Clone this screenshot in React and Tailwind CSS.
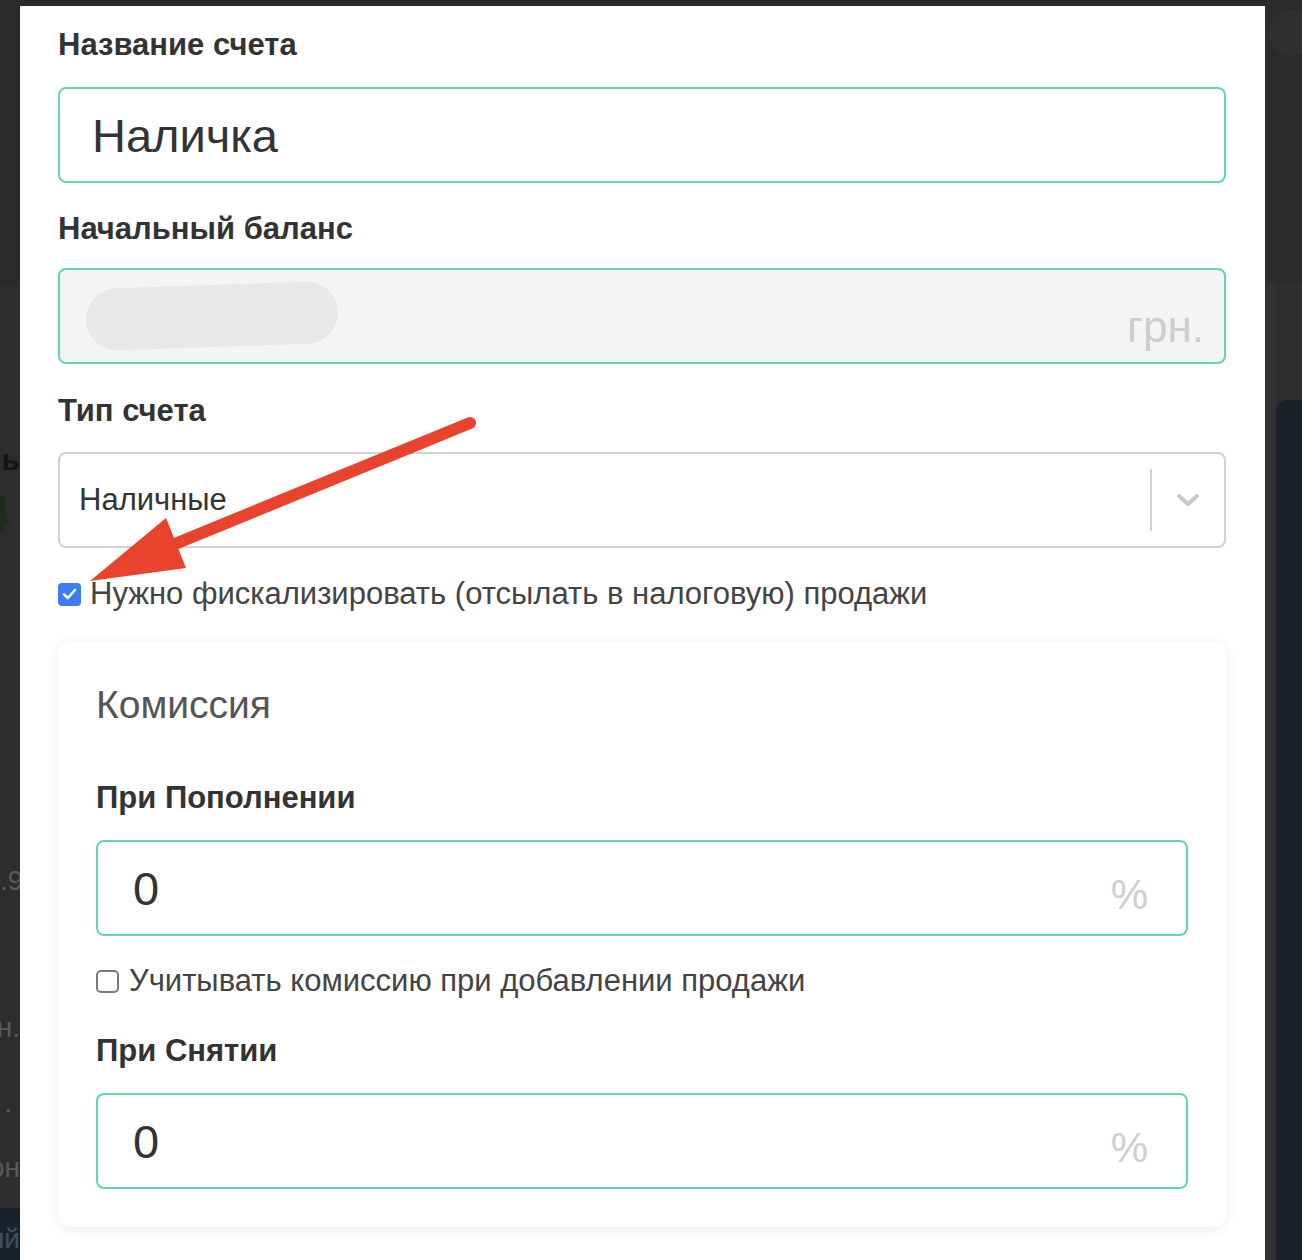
import React from "react";

const font = { fontFamily: '"Liberation Sans", Arial, sans-serif' };

function Label({ children, className = "" }) {
  return (
    <div className={`h-[36px] leading-[36px] text-[31px] font-bold text-[#333] whitespace-nowrap ${className}`}>
      {children}
    </div>
  );
}

function TealInput({ value, suffix, className = "" }) {
  return (
    <div className={`h-[96px] flex items-center border-2 border-[#66d3b5] rounded-[8px] bg-white ${className}`}>
      <div className={`flex-1 text-[47px] text-[#333] leading-none ${suffix ? "pl-[35px]" : "pl-[32px]"}`}>{value}</div>
      {suffix && <div className="pr-[38px] pt-[14px] text-[42px] text-[#cfcfcf] leading-none">{suffix}</div>}
    </div>
  );
}

function Checkbox({ checked }) {
  if (checked) {
    return (
      <div className="w-[23px] h-[23px] rounded-[4px] bg-[#3b7cf4] flex items-center justify-center shrink-0">
        <svg width="15" height="12" viewBox="0 0 15 12" fill="none">
          <path d="M2 6.5L5.8 10L13 2" stroke="white" strokeWidth="2.6" strokeLinecap="round" strokeLinejoin="round" />
        </svg>
      </div>
    );
  }
  return <div className="w-[23px] h-[23px] rounded-[5px] border-2 border-[#7a7a7a] bg-white shrink-0" />;
}

export default function App() {
  return (
    <div style={font} className="w-[1302px] h-[1260px] overflow-hidden bg-[#2b2b2b] flex relative">
      {/* page behind the modal, left side */}
      <div className="w-[20px] shrink-0 flex flex-col overflow-hidden">
        <div className="h-[283px] bg-[#2a2a2a]" />
        <div className="flex-1 bg-[#2d2d2d] flex flex-col">
          <div className="mt-[160px] h-[34px] flex justify-end overflow-hidden">
            <span className="whitespace-nowrap text-[30px] font-bold text-[#151515] leading-[34px]">ль</span>
          </div>
          <div className="mt-[8px] h-[56px] flex justify-end overflow-hidden">
            <span className="whitespace-nowrap text-[52px] font-bold text-[#1b2e20] leading-[56px] mr-[10px]">4</span>
          </div>
          <div className="mt-[325px] h-[30px] flex justify-end overflow-hidden">
            <span className="whitespace-nowrap text-[28px] text-[#5a5a5a] leading-[30px] -mr-[3px]">5.9</span>
          </div>
          <div className="mt-[117px] h-[30px] flex justify-end overflow-hidden">
            <span className="whitespace-nowrap text-[28px] text-[#5a5a5a] leading-[30px]">н.</span>
          </div>
          <div className="mt-[45px] h-[30px] flex justify-end overflow-hidden">
            <span className="whitespace-nowrap text-[28px] text-[#5a5a5a] leading-[30px] mr-[8px]">.</span>
          </div>
          <div className="mt-[35px] h-[30px] flex justify-end overflow-hidden">
            <span className="whitespace-nowrap text-[28px] text-[#5a5a5a] leading-[30px]">он</span>
          </div>
          <div className="mt-[25px] flex-1 bg-[#19212b] flex justify-end overflow-hidden">
            <span className="whitespace-nowrap text-[28px] text-[#3f5064] leading-[30px] mt-[16px]">ий</span>
          </div>
        </div>
      </div>

      {/* modal */}
      <div className="w-[1245px] shrink-0 mt-[6px] bg-white pl-[38px] pr-[39px] pt-[21px]">
        <Label>Название счета</Label>
        <TealInput className="mt-[24px]" value="Наличка" />

        <Label className="mt-[28px]">Начальный баланс</Label>
        <div className="mt-[21px] h-[96px] flex items-center border-2 border-[#66d3b5] rounded-[8px] bg-[#f4f4f4]">
          <div className="ml-[26px] w-[252px] h-[62px] rounded-full bg-[#e8e8e8] -rotate-[2deg]" />
          <div className="flex-1" />
          <div className="pr-[20px] pt-[22px] text-[44px] text-[#cdcdcd] leading-none">грн.</div>
        </div>

        <Label className="mt-[29px]">Тип счета</Label>
        <div className="mt-[23px] h-[96px] flex items-center border-2 border-[#d2d2d2] rounded-[8px] bg-white">
          <div className="flex-1 pl-[19px] text-[31px] text-[#333]">Наличные</div>
          <div className="w-[2px] h-[62px] bg-[#d0d0d0]" />
          <div className="w-[72px] flex justify-center">
            <svg width="24" height="14" viewBox="0 0 24 14" fill="none">
              <path d="M3 3L12 11L21 3" stroke="#c8c8c8" strokeWidth="4" strokeLinecap="round" strokeLinejoin="round" />
            </svg>
          </div>
        </div>

        <div className="mt-[28px] h-[36px] flex items-center">
          <Checkbox checked />
          <span className="ml-[9px] text-[31px] text-[#444] whitespace-nowrap">
            Нужно фискализировать (отсылать в налоговую) продажи
          </span>
        </div>

        {/* commission card */}
        <div className="mt-[30px] rounded-[12px] bg-white shadow-[0_2px_14px_rgba(0,0,0,0.08)] px-[38px] pt-[39px] pb-[38px]">
          <div className="h-[48px] leading-[48px] text-[39px] text-[#555]">Комиссия</div>

          <Label className="mt-[51px]">При Пополнении</Label>
          <TealInput className="mt-[24px]" value="0" suffix="%" />

          <div className="mt-[27px] h-[36px] flex items-center">
            <Checkbox />
            <span className="ml-[10px] text-[31px] text-[#444] whitespace-nowrap">
              Учитывать комиссию при добавлении продажи
            </span>
          </div>

          <Label className="mt-[34px]">При Снятии</Label>
          <TealInput className="mt-[24px]" value="0" suffix="%" />
        </div>
      </div>

      {/* page behind the modal, right side */}
      <div className="flex-1 flex flex-col">
        <div className="h-[283px] bg-[#2a2a2a] flex">
          <div className="w-[3px] bg-[#2e2e2e]" />
          <div className="flex-1 pt-[10px]">
            <div className="w-[46px] h-[46px] rounded-full bg-[#2f2f2f]" />
          </div>
        </div>
        <div className="flex-1 bg-[#2e2e2e] flex">
          <div className="w-[11px] bg-[#313131]" />
          <div className="flex-1 mt-[117px] bg-[#19202a] rounded-tl-[10px]" />
        </div>
      </div>

      {/* red annotation arrow */}
      <svg className="absolute left-0 top-0 pointer-events-none" width="1302" height="1260">
        <line x1="470" y1="423" x2="170" y2="546" stroke="#e8432d" strokeWidth="12" strokeLinecap="round" />
        <polygon points="90,581 166,518 186,568" fill="#e8432d" />
      </svg>
    </div>
  );
}
